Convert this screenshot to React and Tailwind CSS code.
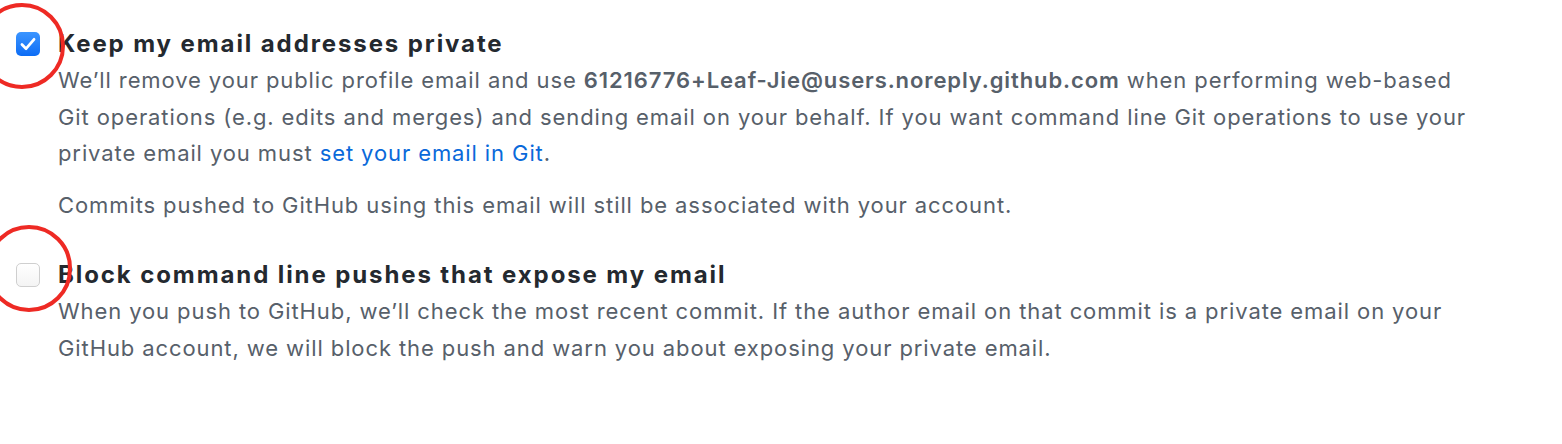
import React from 'react';

const font = { fontFamily: 'Inter, "Liberation Sans", Arial, sans-serif' };

const CheckedBox = () => (
  <span className="flex h-[24px] w-[24px] items-center justify-center rounded-[5px] bg-gradient-to-b from-[#3b95ff] to-[#0a6cf5]">
    <svg width="22" height="22" viewBox="0 0 16 16" fill="none">
      <path d="M3.6 8.4 L6.6 11.4 L12.4 4.6" stroke="white" strokeWidth="2" strokeLinecap="round" strokeLinejoin="round" />
    </svg>
  </span>
);

const EmptyBox = () => (
  <span className="block h-[24px] w-[24px] rounded-[5px] border border-[#cfcfcf] bg-gradient-to-b from-white to-[#f4f4f4]" />
);

const Option = ({ box, title, children }) => (
  <div className="flex">
    <div className="flex w-[58px] shrink-0 pl-[16px] pt-[6px]">{box}</div>
    <div className="flex-1">
      <div className="text-[24px] font-bold leading-[36px] tracking-[1.9px] text-[#24292f]">{title}</div>
      {children}
    </div>
  </div>
);

export default function App() {
  return (
    <div className="relative h-[444px] w-[1562px] overflow-hidden bg-white" style={font}>
      <div className="pt-[26px] pr-[86px]">
        <Option box={<CheckedBox />} title="Keep my email addresses private">
          <p className="text-[22px] leading-[36.5px] tracking-[0.9px] text-[#57606a]">
            We’ll remove your public profile email and use{' '}
            <strong className="font-semibold">61216776+Leaf-Jie@users.noreply.github.com</strong> when performing web-based
            Git operations (e.g. edits and merges) and sending email on your behalf. If you want command line Git operations
            to use your private email you must <a className="text-[#0969da]">set your email in Git</a>.
          </p>
          <p className="mt-[15px] text-[22px] leading-[36.5px] tracking-[0.9px] text-[#57606a]">
            Commits pushed to GitHub using this email will still be associated with your account.
          </p>
        </Option>
        <div className="mt-[34px]">
          <Option box={<EmptyBox />} title="Block command line pushes that expose my email">
            <p className="text-[22px] leading-[36.5px] tracking-[0.9px] text-[#57606a]">
              When you push to GitHub, we’ll check the most recent commit. If the author email on that commit is a private
              email on your GitHub account, we will block the push and warn you about exposing your private email.
            </p>
          </Option>
        </div>
      </div>
      <div className="pointer-events-none absolute left-[-21px] top-[3px] h-[86px] w-[86px] rounded-full border-[4px] border-[#ee2a24]" />
      <div className="pointer-events-none absolute left-[-14px] top-[225px] h-[87px] w-[86px] rounded-full border-[4px] border-[#ee2a24]" />
    </div>
  );
}
